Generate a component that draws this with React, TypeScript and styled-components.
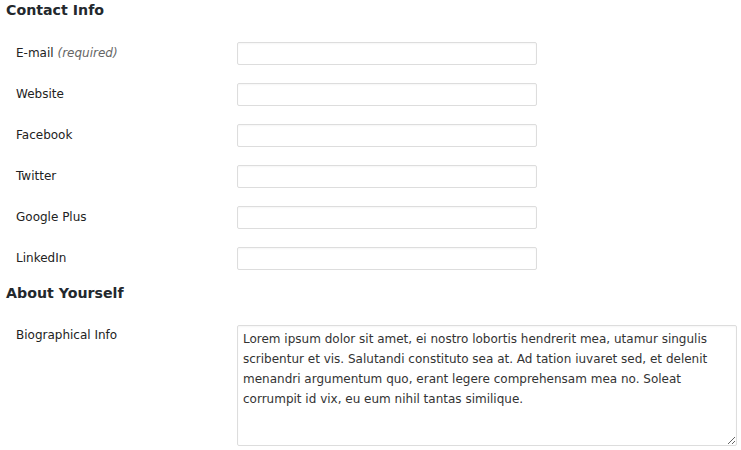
import styled, { createGlobalStyle } from "styled-components";

const GlobalStyle = createGlobalStyle`
  * {
    box-sizing: border-box;
  }

  body {
    margin: 0;
    background: #fff;
    font-family: "DejaVu Sans", sans-serif;
    color: #222;
  }
`;

const Root = styled.div`
  padding: 0 6px;
`;

const Heading = styled.h3<{ $offset?: number }>`
  margin: ${(props) => props.$offset ?? 0}px 0 13px;
  font-size: 14.2px;
  line-height: 20px;
  font-weight: bold;
  color: #23282d;
`;

const FormTable = styled.div`
  display: flex;
  flex-direction: column;
`;

const Row = styled.div<{ $top?: boolean }>`
  display: grid;
  grid-template-columns: 231px 1fr;
  align-items: ${(props) => (props.$top ? "start" : "center")};
  padding: 9px 0;
`;

const Label = styled.label<{ $top?: boolean }>`
  padding-left: 10px;
  font-size: 12px;
  line-height: ${(props) => (props.$top ? "20px" : "23px")};
  color: #222;
`;

const Hint = styled.em`
  color: #666;
`;

const Input = styled.input`
  display: block;
  width: 300px;
  height: 23px;
  margin: 0;
  padding: 3px 5px;
  border: 1px solid #ddd;
  border-radius: 2px;
  background: #fff;
  box-shadow: inset 0 1px 2px rgba(0, 0, 0, 0.04);
  font-family: "DejaVu Sans", sans-serif;
  font-size: 12px;
  color: #333;
  outline: none;
`;

const TextArea = styled.textarea`
  display: block;
  width: 500px;
  height: 121px;
  margin: 0;
  padding: 3px 5px;
  border: 1px solid #ddd;
  border-radius: 2px;
  background: #fff;
  box-shadow: inset 0 1px 2px rgba(0, 0, 0, 0.04);
  font-family: "DejaVu Sans", sans-serif;
  font-size: 12px;
  line-height: 20px;
  color: #333;
  outline: none;
`;

const contactFields = [
  { id: "email", label: "E-mail", required: true },
  { id: "url", label: "Website" },
  { id: "facebook", label: "Facebook" },
  { id: "twitter", label: "Twitter" },
  { id: "googleplus", label: "Google Plus" },
  { id: "linkedin", label: "LinkedIn" },
];

const bio =
  "Lorem ipsum dolor sit amet, ei nostro lobortis hendrerit mea, utamur singulis scribentur et vis. Salutandi constituto sea at. Ad tation iuvaret sed, et delenit menandri argumentum quo, erant legere comprehensam mea no. Soleat corrumpit id vix, eu eum nihil tantas similique.";

const App = (): JSX.Element => {
  return (
    <Root>
      <GlobalStyle />
      <Heading>Contact Info</Heading>
      <FormTable>
        {contactFields.map((field) => (
          <Row key={field.id}>
            <Label htmlFor={field.id}>
              {field.label} {field.required && <Hint>(required)</Hint>}
            </Label>
            <Input id={field.id} type="text" />
          </Row>
        ))}
      </FormTable>

      <Heading $offset={4}>About Yourself</Heading>
      <FormTable>
        <Row $top>
          <Label $top htmlFor="description">
            Biographical Info
          </Label>
          <TextArea id="description" defaultValue={bio} />
        </Row>
      </FormTable>
    </Root>
  );
};

export default App;
